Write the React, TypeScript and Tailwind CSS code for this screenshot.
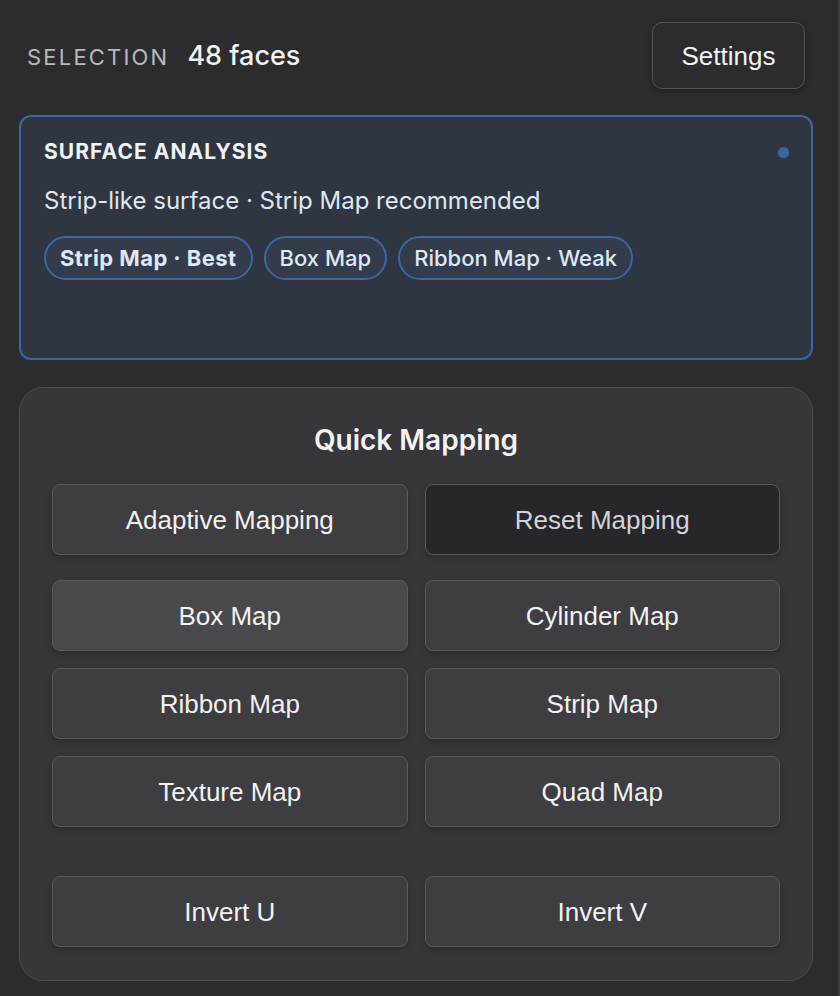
const mappingRows = [
  ["Box Map", "Cylinder Map"],
  ["Ribbon Map", "Strip Map"],
  ["Texture Map", "Quad Map"],
];

function MapButton({ label, variant = "default" }: { label: string; variant?: "default" | "dark" | "active" }) {
  const bg =
    variant === "dark" ? "bg-[#27272b] text-[#d4d4d8]" : variant === "active" ? "bg-[#49484d] text-[#f2f2f4]" : "bg-[#3e3d41] text-[#f2f2f4]";
  return (
    <button
      type="button"
      className={`h-[71px] rounded-[8px] border border-[#5a595e] pt-[2px] ${bg} font-['Liberation_Sans',Arial,sans-serif] text-[26px] shadow-[0_2px_6px_rgba(0,0,0,0.25)]`}
    >
      {label}
    </button>
  );
}

function Chip({ label, strong }: { label: string; strong?: boolean }) {
  return (
    <span
      className={`flex h-[44px] items-center rounded-full border-2 border-[#3a67a6] bg-[#343b4b] px-[14px] text-[22px] leading-[28px] text-[#dde8f8] ${strong ? "font-bold tracking-[0.02em]" : "font-medium"}`}
    >
      {label}
    </span>
  );
}

export default function App() {
  return (
    <div className="min-h-screen border-r-2 border-[#3b3b3e] bg-[#2c2c2e] pl-[19px] pr-[25px] pt-[22px] pb-[15px] font-['Inter',sans-serif]">
      <div className="flex items-center justify-between px-2">
        <div className="mt-[2px] flex items-baseline gap-[18px]">
          <span className="text-[22px] tracking-[0.1em] text-[#b9b9bd]">SELECTION</span>
          <span className="text-[27px] font-medium text-[#f3f3f5]">48 faces</span>
        </div>
        <button
          type="button"
          className="h-[67px] w-[153px] rounded-[10px] border border-[#545358] bg-[#2c2c2e] pt-[2px] font-['Liberation_Sans',Arial,sans-serif] text-[26px] text-[#f2f2f4] shadow-[0_2px_6px_rgba(0,0,0,0.3)]"
        >
          Settings
        </button>
      </div>

      <div className="mt-[26px] h-[245px] rounded-[12px] border-2 border-[#3a67a6] bg-[#303641] px-[23px] pt-[23px]">
        <div className="flex items-center justify-between">
          <h2 className="text-[21px] leading-[24px] font-bold tracking-[0.05em] text-[#eef2fa]">SURFACE ANALYSIS</h2>
          <span className="mr-[-1px] size-[11px] rounded-full bg-[#3a64a2]" />
        </div>
        <p className="mt-[22px] text-[24px] leading-[30px] text-[#dfe7f3]">Strip-like surface · Strip Map recommended</p>
        <div className="mt-[20px] flex gap-[11px]">
          <Chip label="Strip Map · Best" strong />
          <Chip label="Box Map" />
          <Chip label="Ribbon Map · Weak" />
        </div>
      </div>

      <div className="mt-[27px] rounded-[24px] border border-[#4b4a50] bg-[#37363b] px-[32px] pt-[36px] pb-[33px]">
        <h2 className="text-center text-[28px] leading-[32px] font-semibold text-[#f3f3f5]">Quick Mapping</h2>
        <div className="mt-[28px] grid grid-cols-2 gap-x-[17px]">
          <MapButton label="Adaptive Mapping" />
          <MapButton label="Reset Mapping" variant="dark" />
        </div>
        <div className="mt-[25px] grid grid-cols-2 gap-x-[17px] gap-y-[17px]">
          {mappingRows.flat().map((label) => (
            <MapButton key={label} label={label} variant={label === "Box Map" ? "active" : "default"} />
          ))}
        </div>
        <div className="mt-[49px] grid grid-cols-2 gap-x-[17px]">
          <MapButton label="Invert U" />
          <MapButton label="Invert V" />
        </div>
      </div>
    </div>
  );
}
